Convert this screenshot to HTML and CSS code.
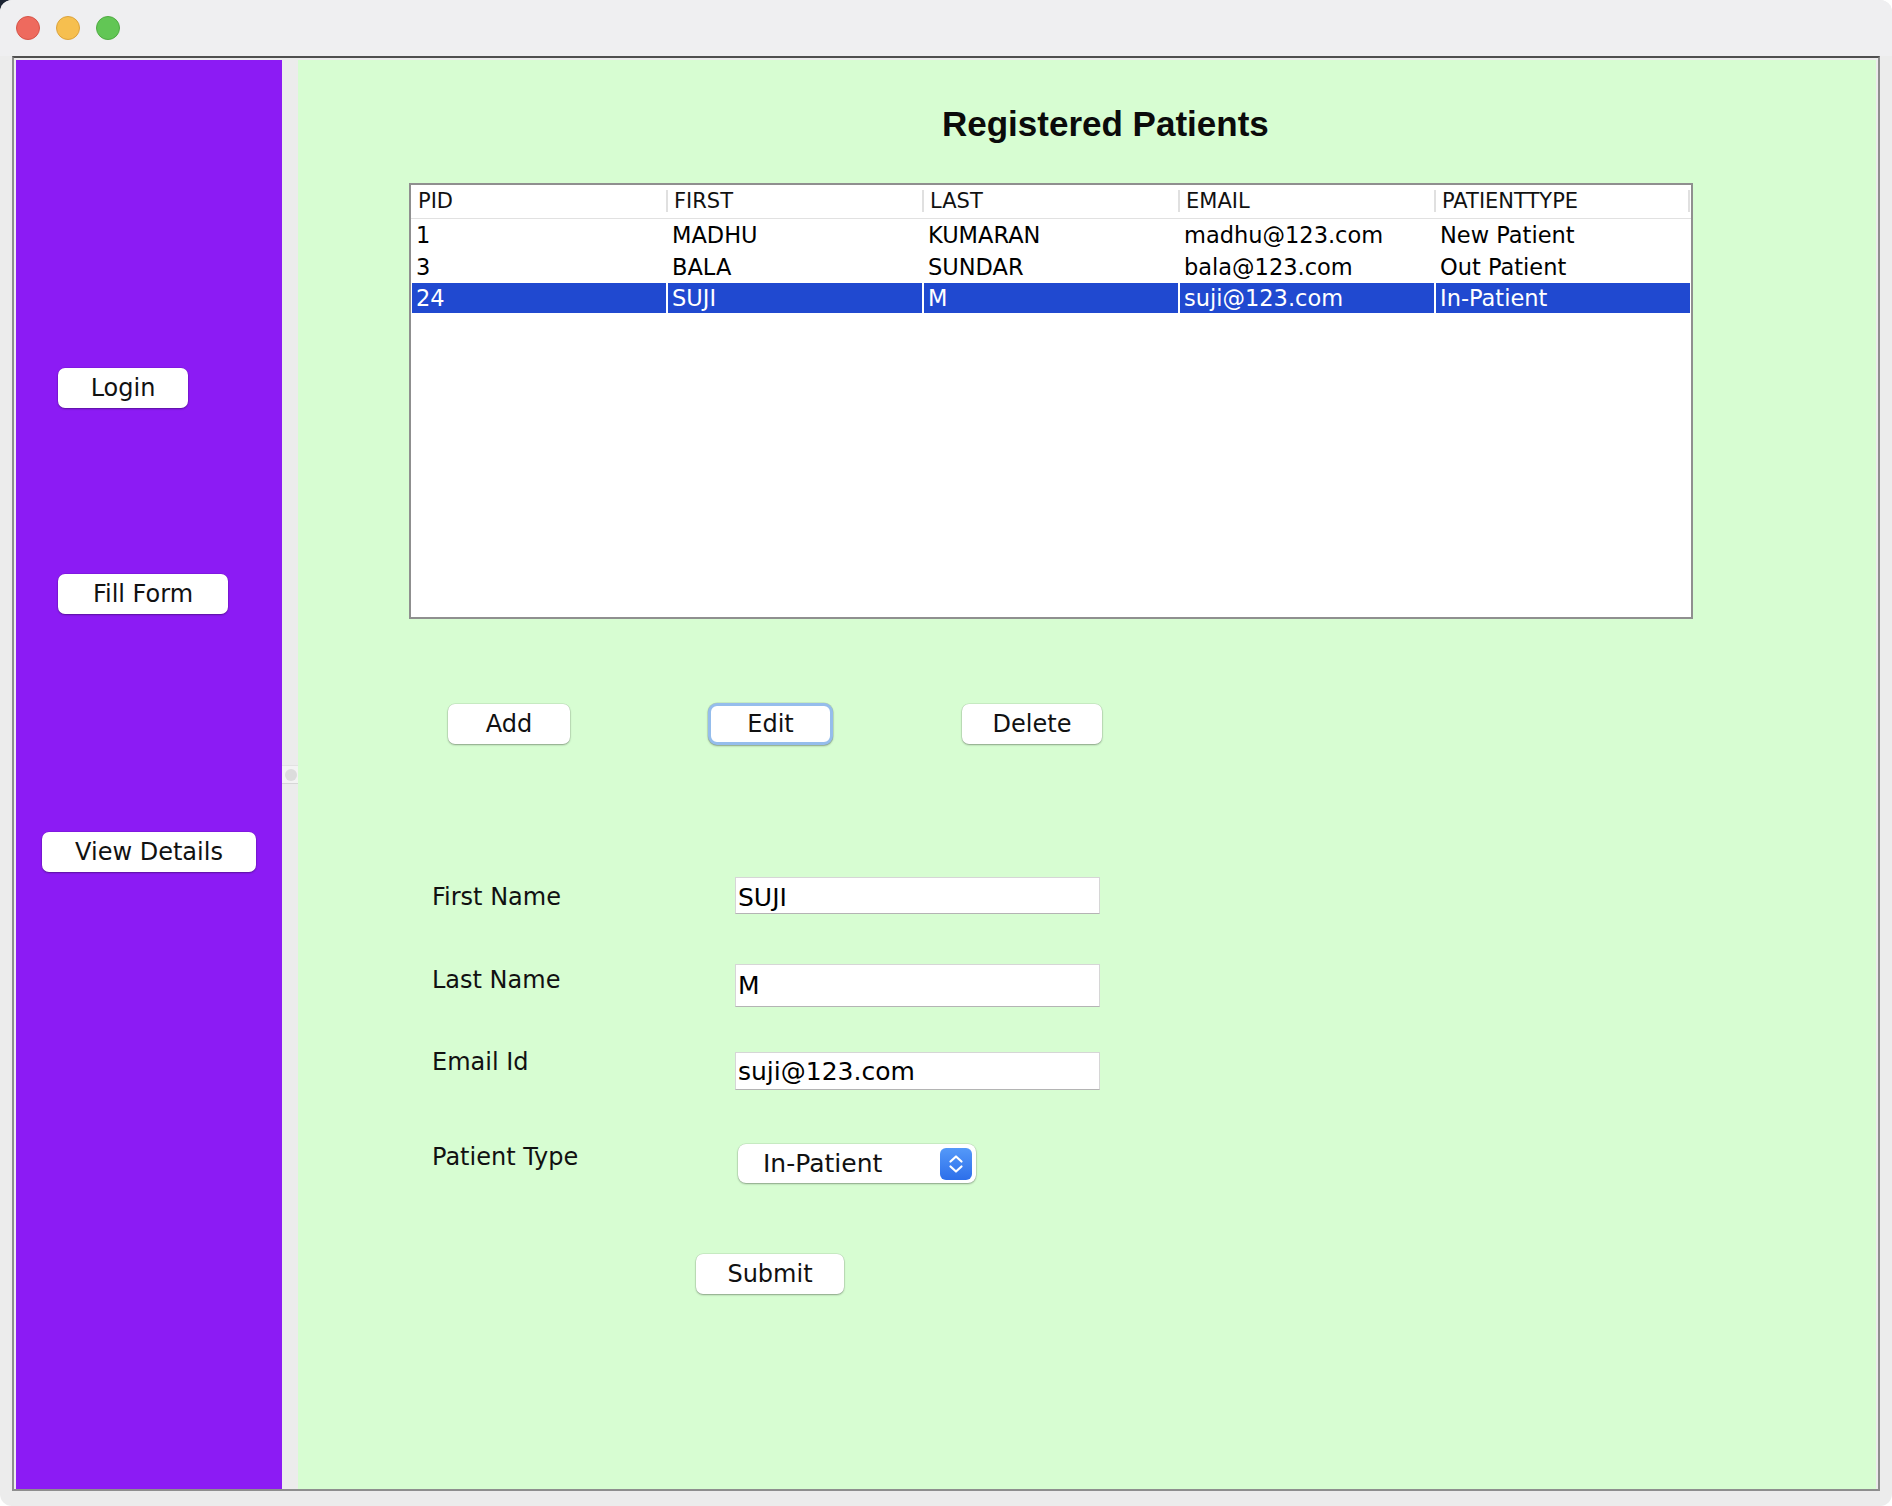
FILE: index.html
```html
<!DOCTYPE html>
<html lang="en">
<head>
<meta charset="utf-8">
<title>Registered Patients</title>
<link rel="stylesheet" href="styles.css">
</head>
<body>
<div class="window">
  <div class="titlebar">
    <span class="light red"></span>
    <span class="light yellow"></span>
    <span class="light green"></span>
  </div>
  <div class="frame">
    <aside class="sidebar">
      <button class="btn side-login">Login</button>
      <button class="btn side-fill">Fill Form</button>
      <button class="btn side-view">View Details</button>
    </aside>
    <div class="divider">
      <div class="handle"><span class="knob"></span></div>
    </div>
    <main class="content">
      <h1 class="title">Registered Patients</h1>
      <div class="table">
        <div class="thead">
          <div class="th">PID</div>
          <div class="th">FIRST</div>
          <div class="th">LAST</div>
          <div class="th">EMAIL</div>
          <div class="th">PATIENTTYPE</div>
        </div>
        <div class="row">
          <div class="td">1</div>
          <div class="td">MADHU</div>
          <div class="td">KUMARAN</div>
          <div class="td">madhu@123.com</div>
          <div class="td">New Patient</div>
        </div>
        <div class="row">
          <div class="td">3</div>
          <div class="td">BALA</div>
          <div class="td">SUNDAR</div>
          <div class="td">bala@123.com</div>
          <div class="td">Out Patient</div>
        </div>
        <div class="row sel">
          <div class="td">24</div>
          <div class="td">SUJI</div>
          <div class="td">M</div>
          <div class="td">suji@123.com</div>
          <div class="td">In-Patient</div>
        </div>
      </div>
      <div class="actions">
        <button class="btn act-add">Add</button>
        <button class="btn act-edit">Edit</button>
        <button class="btn act-delete">Delete</button>
      </div>
      <div class="form-row r1">
        <div class="label">First Name</div>
        <div class="field">SUJI</div>
      </div>
      <div class="form-row r2">
        <div class="label">Last Name</div>
        <div class="field">M</div>
      </div>
      <div class="form-row r3">
        <div class="label">Email Id</div>
        <div class="field">suji@123.com</div>
      </div>
      <div class="form-row r4">
        <div class="label">Patient Type</div>
        <div class="combo">
          <span class="combo-text">In-Patient</span>
          <span class="combo-arrow">
            <svg width="32" height="32" viewBox="0 0 32 32">
              <polyline points="10.5,13.5 16,8.5 21.5,13.5" fill="none" stroke="#fff" stroke-width="2.2" stroke-linecap="round" stroke-linejoin="round"/>
              <polyline points="10.5,18.5 16,23.5 21.5,18.5" fill="none" stroke="#fff" stroke-width="2.2" stroke-linecap="round" stroke-linejoin="round"/>
            </svg>
          </span>
        </div>
      </div>
      <button class="btn submit">Submit</button>
    </main>
  </div>
</div>
</body>
</html>
```

FILE: styles.css
```css
* { box-sizing: border-box; }

html, body {
  margin: 0;
  padding: 0;
}

body {
  background: linear-gradient(to right, #1c2433 0, #1c2433 20px, #ffffff 20px) top left / 100% 20px no-repeat, #ffffff;
  font-family: "DejaVu Sans", "Liberation Sans", sans-serif;
}

.window {
  width: 1892px;
  height: 1506px;
  background: #ececec;
  border-radius: 12px;
  overflow: hidden;
  display: flex;
  flex-direction: column;
}

.titlebar {
  height: 56px;
  flex: none;
  background: #efeff1;
  display: flex;
  align-items: center;
  padding-left: 16px;
  gap: 16px;
}

.light {
  width: 24px;
  height: 24px;
  border-radius: 50%;
  display: block;
}
.light.red { background: #ee6a5e; border: 1px solid #d65448; }
.light.yellow { background: #f6bf4f; border: 1px solid #dca33c; }
.light.green { background: #62c655; border: 1px solid #4fab42; }

.frame {
  height: 1435px;
  margin: 0 12px;
  flex: none;
  display: flex;
  border: 2px solid #8e8e8e;
  border-top-color: #4f4f4f;
  padding: 2px 2px 0 2px;
  background: #ececec;
}

.sidebar {
  width: 266px;
  flex: none;
  background: #8c1bf4;
  display: flex;
  flex-direction: column;
  align-items: flex-start;
}

.btn {
  display: flex;
  align-items: center;
  justify-content: center;
  height: 40px;
  padding: 0;
  border: none;
  border-radius: 7px;
  background: #ffffff;
  color: #111111;
  font-family: "DejaVu Sans", "Liberation Sans", sans-serif;
  font-size: 24px;
  line-height: 28px;
  box-shadow: 0 1px 2px rgba(0, 0, 0, 0.32), 0 0 0 0.5px rgba(0, 0, 0, 0.12);
}

.side-login { margin: 308px 0 0 42px; width: 130px; }
.side-fill { margin: 166px 0 0 42px; width: 170px; }
.side-view { margin: 218px 0 0 26px; width: 214px; }

.divider {
  width: 16px;
  flex: none;
  background: #ececec;
  display: flex;
  align-items: center;
}

.handle {
  width: 16px;
  height: 19px;
  background: #f3f3f3;
  border-top: 1px solid #e2e2e2;
  border-bottom: 1px solid #d6d6d6;
  display: flex;
  align-items: center;
  justify-content: center;
}

.knob {
  width: 12px;
  height: 12px;
  border-radius: 50%;
  background: #dcdcdc;
  margin-left: 2px;
}

.content {
  flex: 1;
  background: #d7fdd2;
  display: flex;
  flex-direction: column;
  align-items: flex-start;
}

.title {
  margin: 44px 0 0 644px;
  font-family: "Liberation Sans", Arial, sans-serif;
  font-weight: 700;
  font-size: 35px;
  line-height: 40px;
  color: #0b0b0b;
}

.table {
  margin: 39px 0 0 111px;
  width: 1284px;
  height: 436px;
  border: 2px solid #8f8f8f;
  background: #ffffff;
}

.thead {
  display: grid;
  grid-template-columns: repeat(5, 256px);
  height: 34px;
  border-bottom: 1px solid #e1e1e1;
}

.th {
  position: relative;
  padding-left: 7px;
  font-size: 21px;
  line-height: 33px;
  color: #111111;
  white-space: nowrap;
}

.th + .th::before,
.th:last-child::after {
  content: "";
  position: absolute;
  top: 5px;
  width: 2px;
  height: 22px;
  background: #e0e0e0;
}
.th + .th::before { left: -1px; }
.th:last-child::after { right: 1px; }

.row {
  display: grid;
  grid-template-columns: repeat(5, 256px);
  height: 32px;
}

.td {
  padding-left: 5px;
  font-size: 22.5px;
  line-height: 32px;
  color: #000000;
  white-space: nowrap;
}

.row.sel .td {
  background: #2049d0;
  background-clip: padding-box;
  color: #ffffff;
  border-left: 1px solid transparent;
  border-right: 1px solid transparent;
  border-bottom: 2px solid transparent;
  line-height: 30px;
  padding-left: 4px;
}

.actions {
  margin: 84px 0 0 150px;
  height: 42px;
  display: flex;
  align-items: center;
}

.act-add { width: 122px; }
.act-edit {
  width: 125px;
  height: 42px;
  margin-left: 138px;
  border: 3px solid #95bdec;
  border-radius: 9px;
}
.act-delete { width: 140px; margin-left: 129px; }

.form-row {
  margin-left: 134px;
  display: flex;
  align-items: flex-start;
}

.label {
  width: 303px;
  flex: none;
  font-size: 24px;
  line-height: 28px;
  color: #111111;
}

.field {
  width: 365px;
  background: #ffffff;
  border: 1px solid #d6d6d6;
  border-bottom-color: #b4b4b4;
  padding-left: 2px;
  font-size: 25px;
  color: #000000;
  display: flex;
  align-items: center;
  white-space: nowrap;
}

.r1 { margin-top: 132px; height: 37px; }
.r1 .label { margin-top: 6px; }
.r1 .field { height: 37px; padding-top: 3px; }

.r2 { margin-top: 50px; height: 43px; }
.r2 .label { margin-top: 2px; }
.r2 .field { height: 43px; }

.r3 { margin-top: 41px; height: 42px; }
.r3 .field { margin-top: 4px; height: 38px; }

.r4 { margin-top: 53px; height: 41px; }

.combo {
  margin: 1px 0 0 3px;
  width: 238px;
  height: 39px;
  background: #ffffff;
  border-radius: 8px;
  box-shadow: 0 1px 2px rgba(0, 0, 0, 0.32), 0 0 0 0.5px rgba(0, 0, 0, 0.12);
  display: flex;
  align-items: center;
  justify-content: space-between;
  padding: 0 4px 0 25px;
}

.combo-text {
  font-size: 25px;
  line-height: 30px;
  color: #111111;
}

.combo-arrow {
  width: 32px;
  height: 32px;
  border-radius: 6px;
  background: linear-gradient(to bottom, #5499f9, #2d6fea);
  display: flex;
}

.submit {
  margin: 70px 0 0 398px;
  width: 148px;
}
```
